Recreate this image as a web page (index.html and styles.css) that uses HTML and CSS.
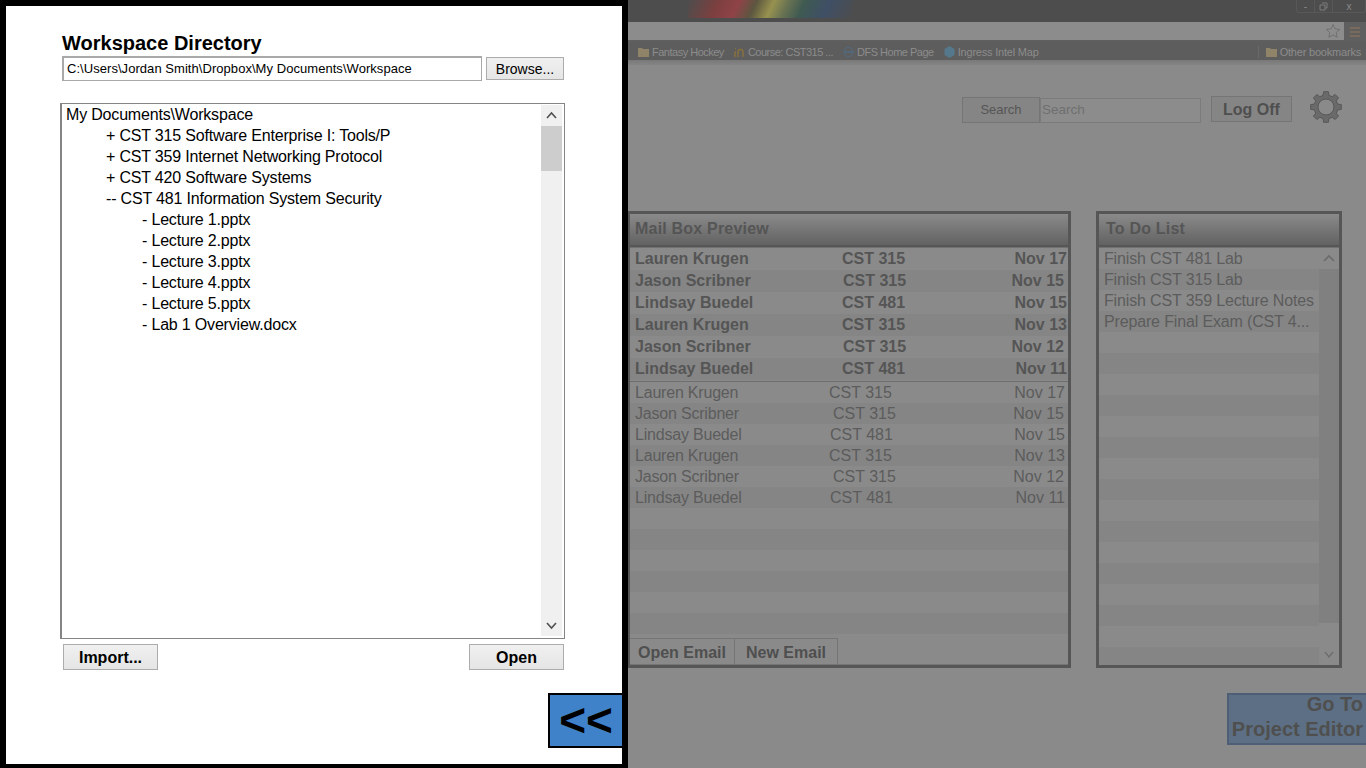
FILE: index.html
```html
<!DOCTYPE html>
<html>
<head>
    <meta name="viewport" content="width=device-width, initial-scale=1.0">
    <title>Workspace Directory</title>
    <link rel="stylesheet" href="styles.css">
</head>
<body>
<div class="screen">
    <!-- slide out workspace drawer -->
    <aside class="drawer">
        <h1 class="drawer-title">Workspace Directory</h1>
        <div class="dir-row">
            <input class="dir-input" type="text" value="C:\Users\Jordan Smith\Dropbox\My Documents\Workspace">
            <button class="btn btn-browse">Browse...</button>
        </div>
        <div class="tree">
            <ul class="tree-list">
                <li>My Documents\Workspace</li>
                <li class="lvl1">+ CST 315 Software Enterprise I: Tools/P</li>
                <li class="lvl1">+ CST 359 Internet Networking Protocol</li>
                <li class="lvl1">+ CST 420 Software Systems</li>
                <li class="lvl1">-- CST 481 Information System Security</li>
                <li class="lvl2">- Lecture 1.pptx</li>
                <li class="lvl2">- Lecture 2.pptx</li>
                <li class="lvl2">- Lecture 3.pptx</li>
                <li class="lvl2">- Lecture 4.pptx</li>
                <li class="lvl2">- Lecture 5.pptx</li>
                <li class="lvl2">- Lab 1 Overview.docx</li>
            </ul>
            <div class="scroll">
                <svg class="arrow" width="21" height="21" viewBox="0 0 21 21"><path d="M6 13l4.5-5 4.5 5" fill="none" stroke="#505050" stroke-width="1.6"/></svg>
                <div class="scroll-thumb"></div>
                <svg class="arrow arrow-down" width="21" height="21" viewBox="0 0 21 21"><path d="M6 8l4.5 5 4.5-5" fill="none" stroke="#505050" stroke-width="1.6"/></svg>
            </div>
        </div>
        <div class="tree-actions">
            <button class="btn btn-action">Import...</button>
            <button class="btn btn-action">Open</button>
        </div>
        <button class="collapse">&lt;&lt;</button>
    </aside>

    <!-- dimmed page behind the drawer -->
    <div class="page">
        <div class="titlebar">
            <div class="rainbow"></div>
            <div class="win-controls">
                <span class="win-btn">-</span>
                <span class="win-btn">
                    <svg width="9" height="9" viewBox="0 0 9 9"><path d="M3 1h5v5H6M1 3h5v5H1z" fill="none" stroke="#7c7c7c"/></svg>
                </span>
                <span class="win-btn win-close">x</span>
            </div>
        </div>
        <div class="toolbar">
            <div class="omnibox">
                <svg width="16" height="16" viewBox="0 0 16 16"><path d="M8 1.5l2 4.4 4.700.5-3.500 3.200 1 4.700L8 11.900l-4.200 2.400 1-4.700L1.300 6.400l4.700-.5z" fill="none" stroke="#707070"/></svg>
            </div>
            <div class="menu-icon"><i></i><i></i><i></i></div>
        </div>
        <div class="bookmarks">
            <span class="bookmark bookmark-tight">
                <svg width="11" height="10" viewBox="0 0 11 10"><path d="M0 1h4l1 1h6v8H0z" fill="#8f8468"/></svg>Fantasy Hockey
            </span>
            <span class="bookmark bookmark-tight">
                <svg width="11" height="10" viewBox="0 0 11 10"><path d="M1 10V4M4 10V5a2.500 2.500 0 0 1 5 0v5M1 1.500h1" fill="none" stroke="#87703c" stroke-width="1.500"/></svg>Course: CST315 ...
            </span>
            <span class="bookmark bookmark-tight">
                <svg width="11" height="12" viewBox="0 0 12 12"><circle cx="6" cy="6" r="5" fill="none" stroke="#4f6c86"/><path d="M1 6h10" stroke="#4f6c86" stroke-width="1.500"/></svg>DFS Home Page
            </span>
            <span class="bookmark">
                <svg width="11" height="12" viewBox="0 0 10 12"><path d="M5 0l5 3v6l-5 3-5-3V3z" fill="#56788c"/></svg>Ingress Intel Map
            </span>
            <span class="bookmark bookmark-other">
                <svg width="11" height="10" viewBox="0 0 11 10"><path d="M0 1h4l1 1h6v8H0z" fill="#8f8468"/></svg>Other bookmarks
            </span>
        </div>

        <div class="search-row">
            <button class="search-btn">Search</button>
            <input class="search-input" type="text" placeholder="Search">
            <button class="logoff">Log Off</button>
            <svg class="gear" width="32" height="32" viewBox="0 0 32 32">
                <path fill="#6a6a6a" stroke="#585858" fill-rule="evenodd" d="M13.100 4.360L13.580.69H18.420L18.900 4.360L22.180 5.710L25.110 3.460L28.540 6.890L26.290 9.820L27.640 13.100L31.310 13.580V18.420L27.640 18.900L26.290 22.180L28.540 25.110L25.110 28.540L22.180 26.290L18.900 27.640L18.420 31.310H13.580L13.100 27.640L9.820 26.290L6.890 28.540L3.460 25.110L5.710 22.180L4.360 18.900L.69 18.420V13.580L4.360 13.100L5.710 9.820L3.460 6.890L6.890 3.460L9.820 5.710zM16 8a8 8 0 1 0 0 16 8 8 0 0 0 0-16z"/>
            </svg>
        </div>

        <div class="panels">
            <section class="panel panel-mail">
                <h2 class="panel-head">Mail Box Preview</h2>
                <div class="panel-body">
                    <div class="mail-list mail-unread">
                        <div class="mail-row"><span>Lauren Krugen</span><span class="course">CST 315</span><span class="date">Nov 17</span></div>
                        <div class="mail-row row-alt jason"><span>Jason Scribner</span><span class="course">CST 315</span><span class="date">Nov 15</span></div>
                        <div class="mail-row"><span>Lindsay Buedel</span><span class="course">CST 481</span><span class="date">Nov 15</span></div>
                        <div class="mail-row row-alt"><span>Lauren Krugen</span><span class="course">CST 315</span><span class="date">Nov 13</span></div>
                        <div class="mail-row jason"><span>Jason Scribner</span><span class="course">CST 315</span><span class="date">Nov 12</span></div>
                        <div class="mail-row row-alt"><span>Lindsay Buedel</span><span class="course">CST 481</span><span class="date">Nov 11</span></div>
                    </div>
                    <div class="mail-list mail-read">
                        <div class="mail-row"><span class="sender">Lauren Krugen</span><span class="course">CST 315</span><span class="date">Nov 17</span></div>
                        <div class="mail-row row-alt jason"><span class="sender">Jason Scribner</span><span class="course">CST 315</span><span class="date">Nov 15</span></div>
                        <div class="mail-row lindsay"><span class="sender">Lindsay Buedel</span><span class="course">CST 481</span><span class="date">Nov 15</span></div>
                        <div class="mail-row row-alt"><span class="sender">Lauren Krugen</span><span class="course">CST 315</span><span class="date">Nov 13</span></div>
                        <div class="mail-row jason"><span class="sender">Jason Scribner</span><span class="course">CST 315</span><span class="date">Nov 12</span></div>
                        <div class="mail-row row-alt lindsay"><span class="sender">Lindsay Buedel</span><span class="course">CST 481</span><span class="date">Nov 11</span></div>
                        <div class="mail-row"></div>
                        <div class="mail-row row-alt"></div>
                        <div class="mail-row"></div>
                        <div class="mail-row row-alt"></div>
                        <div class="mail-row"></div>
                        <div class="mail-row row-alt"></div>
                    </div>
                    <div class="mail-tabs">
                        <button class="mail-tab">Open Email</button>
                        <button class="mail-tab">New Email</button>
                    </div>
                </div>
            </section>

            <section class="panel panel-todo">
                <h2 class="panel-head">To Do List</h2>
                <div class="panel-body todo-body">
                    <ul class="todo-list">
                        <li>Finish CST 481 Lab</li>
                        <li>Finish CST 315 Lab</li>
                        <li>Finish CST 359 Lecture Notes</li>
                        <li>Prepare Final Exam (CST 4...</li>
                        <li></li><li></li><li></li><li></li><li></li><li></li><li></li><li></li>
                        <li></li><li></li><li></li><li></li><li></li><li></li><li></li><li></li>
                    </ul>
                    <div class="todo-scroll">
                        <svg class="arrow-dim" width="20" height="21" viewBox="0 0 20 21"><path d="M5 13l5-5 5 5" fill="none" stroke="#6b6b6b" stroke-width="1.600"/></svg>
                        <div class="todo-thumb"></div>
                        <svg class="arrow-dim" width="20" height="21" viewBox="0 0 20 21"><path d="M6 8l4 5 4-5" fill="none" stroke="#6b6b6b" stroke-width="1.300"/></svg>
                    </div>
                </div>
            </section>
        </div>

        <button class="goto"><span class="goto-text">Go To<br>Project Editor</span></button>
    </div>
</div>
</body>
</html>
```

FILE: styles.css
```css
body {
    margin: 0;
    font-family: "Liberation Sans", Arial, sans-serif;
    background-color: #8a8a8a;
}

ul {
    list-style: none;
    margin: 0;
    padding: 0;
}

button {
    font-family: inherit;
    padding: 0;
}

.screen {
    display: flex;
    width: 1366px;
    height: 768px;
    overflow: hidden;
}

/* drawer */
.drawer {
    display: flex;
    flex-direction: column;
    flex: none;
    box-sizing: border-box;
    width: 628px;
    height: 768px;
    background-color: #fff;
    border: solid #000;
    border-width: 6px 6px 4px 6px;
}

.drawer-title {
    margin: 25px 0 0 56px;
    height: 25px;
    font-size: 20px;
    line-height: 25px;
    color: #000;
}

.dir-row {
    display: flex;
    align-items: center;
    gap: 4px;
    margin-left: 56px;
    height: 25px;
}

.dir-input {
    box-sizing: border-box;
    width: 420px;
    height: 25px;
    padding: 0 3px 2px;
    border: 1px solid #a9a9a9;
    border-left-width: 2px;
    border-top-width: 2px;
    font-family: inherit;
    font-size: 13px;
    letter-spacing: 0.05px;
    color: #000;
    outline: none;
}

.btn {
    box-sizing: border-box;
    border: 1px solid #acacac;
    background: linear-gradient(#f0f0f0, #e5e5e5);
    color: #000;
}

.btn-browse {
    width: 78px;
    height: 23px;
    font-size: 14px;
}

.tree {
    display: flex;
    box-sizing: border-box;
    width: 505px;
    height: 536px;
    margin: 22px 0 0 54px;
    border: 1px solid #858585;
    border-left-width: 2px;
    padding: 1px 2px 2px 0;
}

.tree-list {
    flex: 1;
    margin-top: -1px;
    font-size: 16px;
    letter-spacing: -0.18px;
    color: #000;
}

.tree-list li {
    height: 21px;
    line-height: 21px;
    padding-left: 4px;
}

.tree-list .lvl1 {
    padding-left: 44px;
}

.tree-list .lvl2 {
    padding-left: 80px;
}

.scroll {
    display: flex;
    flex-direction: column;
    width: 21px;
    background-color: #f0f0f0;
}

.arrow {
    flex: none;
}

.arrow-down {
    margin-top: auto;
}

.scroll-thumb {
    height: 45px;
    background-color: #cdcdcd;
}

.tree-actions {
    display: flex;
    justify-content: space-between;
    width: 501px;
    margin: 5px 0 0 57px;
}

.btn-action {
    width: 95px;
    height: 26px;
    padding-top: 2px;
    font-size: 16px;
    font-weight: bold;
}

.collapse {
    align-self: flex-end;
    box-sizing: border-box;
    width: 74px;
    height: 55px;
    margin-top: 23px;
    padding-bottom: 2px;
    border: 2px solid #000;
    border-right: none;
    background-color: #3f82c9;
    color: #000;
    font-size: 46px;
    font-weight: bold;
    line-height: 46px;
}

/* page behind */
.page {
    flex: 1;
    display: flex;
    flex-direction: column;
    min-width: 0;
}

.titlebar {
    position: relative;
    display: flex;
    justify-content: flex-end;
    height: 20px;
    padding-bottom: 2px;
    background-color: #4d4d4d;
}

.rainbow {
    position: absolute;
    left: 60px;
    top: 0;
    width: 165px;
    height: 18px;
    background: linear-gradient(115deg, #4d4d4d 0%, #7d3f3f 18%, #8f4347 30%, #5c5640 40%, #98924f 50%, #6b7452 58%, #3f5a52 68%, #3f4f66 82%, #4d4d4d 100%);
}

.win-controls {
    display: flex;
    height: 12px;
    margin-right: 0;
    border: 1px solid #585858;
    border-top: none;
    border-radius: 0 0 3px 3px;
}

.win-btn {
    display: flex;
    align-items: center;
    justify-content: center;
    width: 17px;
    font-size: 10px;
    color: #8a8a8a;
    border-right: 1px solid #585858;
}

.win-close {
    width: 32px;
    border-right: none;
}

.toolbar {
    display: flex;
    align-items: flex-start;
    gap: 6px;
    height: 20px;
    background-color: #5f5f5f;
}

.omnibox {
    display: flex;
    align-items: center;
    justify-content: flex-end;
    box-sizing: border-box;
    flex: 1;
    height: 18px;
    padding-right: 3px;
    background-color: #8c8c8c;
}

.menu-icon {
    width: 10px;
    margin: 3px 6px 0 0;
}

.menu-icon i {
    display: block;
    height: 2px;
    margin: 2px 0;
    background-color: #7a6a5a;
}

.bookmarks {
    display: flex;
    align-items: center;
    gap: 10px;
    box-sizing: border-box;
    height: 23px;
    padding: 0 5px 4px 10px;
    background: linear-gradient(#5d5d5d, #5d5d5d 18px, #787878 18px, #858585);
    font-size: 11px;
    letter-spacing: -0.2px;
    color: #8c8c8c;
}

.bookmark {
    display: flex;
    align-items: center;
    gap: 3px;
    white-space: nowrap;
}

.bookmark-tight {
    letter-spacing: -0.5px;
}

.bookmark-other {
    margin-left: auto;
    padding-left: 7px;
    border-left: 1px solid #6a6a6a;
}

.search-row {
    display: flex;
    align-items: flex-start;
    height: 32px;
    margin: 26px 0 0 334px;
}

.search-btn {
    box-sizing: border-box;
    width: 78px;
    height: 26px;
    margin-top: 6px;
    padding-bottom: 2px;
    border: 1px solid #757575;
    background-color: #858585;
    color: #555;
    font-size: 13px;
}

.search-input {
    box-sizing: border-box;
    width: 161px;
    height: 25px;
    margin-top: 7px;
    padding: 0 1px 2px;
    border: 1px solid #7b7b7b;
    background-color: #8c8c8c;
    font-family: inherit;
    font-size: 13.5px;
    outline: none;
}

.search-input::placeholder {
    color: #6f6f6f;
}

.logoff {
    box-sizing: border-box;
    width: 81px;
    height: 26px;
    margin: 5px 0 0 10px;
    padding-top: 2px;
    border: 1px solid #757575;
    background-color: #858585;
    color: #4f4f4f;
    font-size: 16px;
    font-weight: bold;
}

.gear {
    flex: none;
    margin-left: 18px;
}

.panels {
    display: flex;
    gap: 25px;
    margin-top: 88px;
    height: 457px;
}

.panel {
    display: flex;
    flex-direction: column;
    box-sizing: border-box;
    border: 3px solid #565656;
}

.panel-mail {
    width: 443px;
    border-left-width: 2px;
}

.panel-todo {
    width: 246px;
}

.panel-head {
    flex: none;
    box-sizing: border-box;
    height: 33px;
    margin: 0;
    padding-left: 5px;
    border-bottom: 2px solid #565656;
    background: linear-gradient(#8a8a8a, #626262);
    color: #555;
    font-size: 16px;
    letter-spacing: 0.2px;
    line-height: 30px;
}

.panel-todo .panel-head {
    padding-left: 7px;
}

.panel-body {
    position: relative;
    flex: 1;
    min-height: 0;
    border-top: 1px solid #707070;
}

.mail-row {
    display: grid;
    grid-template-columns: 207px 1fr auto;
    padding: 0 1px 0 5px;
}

.mail-row.row-alt {
    background-color: #858585;
}

.mail-unread {
    padding-bottom: 1px;
    border-bottom: 1px solid #6e6e6e;
}

.mail-unread .mail-row {
    height: 22px;
    line-height: 21px;
    font-size: 16px;
    font-weight: bold;
    color: #555;
}

.mail-unread .jason {
    padding-right: 4px;
}

.mail-unread .jason .course {
    margin-left: 1px;
}

.mail-read .mail-row {
    height: 21px;
    line-height: 21px;
    font-size: 16px;
    color: #5c5c5c;
    grid-template-columns: 194px 1fr auto;
    padding-right: 3px;
}

.mail-read .sender {
    letter-spacing: -0.2px;
}

.mail-read .jason .course {
    margin-left: 4px;
}

.mail-read .lindsay .course {
    margin-left: 1px;
}

.mail-read .jason .date {
    margin-right: 1px;
}

.mail-tabs {
    position: absolute;
    left: 0;
    right: 0;
    bottom: 0;
    display: flex;
    height: 26px;
    border-bottom: 1px solid #757575;
}

.mail-tab {
    box-sizing: border-box;
    height: 27px;
    padding-top: 2px;
    border: 1px solid #757575;
    background-color: #8a8a8a;
    color: #4f4f4f;
    font-size: 16px;
    font-weight: bold;
}

.mail-tab:first-child {
    width: 105px;
    border-left: none;
}

.mail-tab:last-child {
    width: 103px;
    border-left: none;
}

.todo-body {
    display: flex;
    overflow: hidden;
}

.todo-list {
    flex: 1;
    font-size: 16px;
    letter-spacing: -0.15px;
    color: #5c5c5c;
}

.todo-list li {
    height: 21px;
    line-height: 21px;
    padding-left: 5px;
    white-space: nowrap;
}

.todo-list li:nth-child(even) {
    background-color: #858585;
}

.todo-scroll {
    display: flex;
    flex-direction: column;
    flex: none;
    width: 20px;
    background-color: #8a8a8a;
}

.arrow-dim {
    flex: none;
}

.todo-thumb {
    flex: 1;
    margin-bottom: 21px;
    background-color: #808080;
}

.goto {
    align-self: flex-end;
    box-sizing: border-box;
    width: 139px;
    height: 52px;
    margin-top: 25px;
    padding-right: 3px;
    border: 2px solid #4e5e75;
    border-right: none;
    background-color: #5d6f84;
    color: #4f4f4f;
    font-size: 20px;
    font-weight: bold;
    line-height: 25px;
    text-align: right;
    white-space: nowrap;
}

.goto-text {
    display: block;
    margin-top: -4px;
}
```
